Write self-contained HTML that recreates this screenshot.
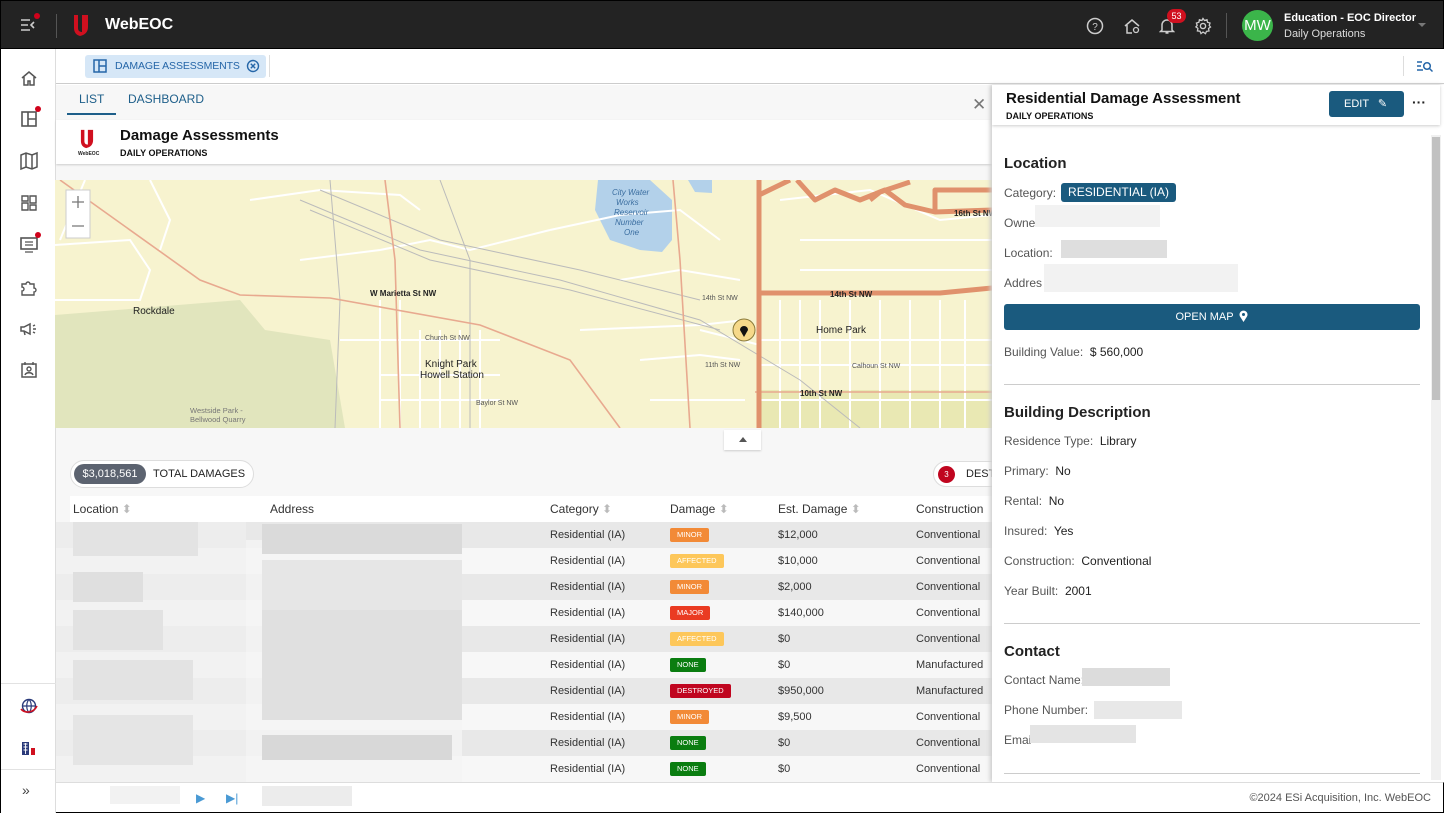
<!DOCTYPE html>
<html><head><meta charset="utf-8">
<style>
*{box-sizing:border-box;margin:0;padding:0}
body{width:1444px;height:813px;overflow:hidden;font-family:"Liberation Sans",sans-serif;background:#fff;position:relative;color:#222}
.abs{position:absolute;white-space:nowrap}
.top{left:0;top:0;width:1444px;height:49px;background:#232323;border:1px solid #000}
.side{left:0;top:49px;width:56px;height:764px;background:#fff;border-right:1px solid #ddd;border-left:1px solid #000}
.ico{position:absolute;left:18px;width:20px;height:20px}
.dot{position:absolute;width:6px;height:6px;border-radius:50%;background:#d0021b}
.row{position:absolute;left:56px;width:936px;height:26px;font-size:11px;color:#333}
.row span{position:absolute;top:7px}
.badge{position:absolute;top:6px;height:14px;font-size:7.5px;color:#fff;line-height:14px;padding:0 7px;border-radius:2px;left:614px}
.lbl{position:absolute;left:1004px;font-size:12px;color:#555;white-space:nowrap}
.lbl b{color:#222;font-weight:normal}
.h{position:absolute;left:1004px;font-size:15px;font-weight:bold;color:#222}
.blur{position:absolute;background:#ddd}
</style></head><body>

<div class="abs top">
  <svg class="abs" style="left:18px;top:16px" width="18" height="16" viewBox="0 0 18 16"><path d="M2 3h9M2 8h7M2 13h9M15 5l-3 3 3 3" stroke="#ccc" stroke-width="1.6" fill="none"/></svg>
  <div class="dot" style="left:33px;top:12px"></div>
  <div class="abs" style="left:55px;top:13px;width:1px;height:24px;background:#555"></div>
  <svg class="abs" style="left:72px;top:13px" width="16" height="23" viewBox="0 0 16 23"><path d="M1 1h4v13c0 3 2 4 4 4V1h6v12c0 5-3 8-8 9C3 21 1 18 1 14z" fill="#d0101f"/></svg>
  <div class="abs" style="left:104px;top:15px;color:#fff;font-size:16px;font-weight:bold">WebEOC</div>
  <svg class="abs" style="left:1085px;top:16px" width="18" height="18" viewBox="0 0 18 18"><circle cx="9" cy="9" r="7.5" stroke="#ccc" stroke-width="1.5" fill="none"/><text x="9" y="13" font-size="10" fill="#ccc" text-anchor="middle" font-family="Liberation Sans">?</text></svg>
  <svg class="abs" style="left:1122px;top:16px" width="18" height="18" viewBox="0 0 18 18"><path d="M2 9L9 3l7 6M4 8v8h5" stroke="#ccc" stroke-width="1.5" fill="none"/><circle cx="13" cy="13" r="2.5" stroke="#ccc" stroke-width="1.3" fill="none"/></svg>
  <svg class="abs" style="left:1158px;top:16px" width="16" height="18" viewBox="0 0 16 18"><path d="M3 13V8a5 5 0 0 1 10 0v5l1.5 1.5h-13zM6.5 16h3" stroke="#ccc" stroke-width="1.5" fill="none"/></svg>
  <div class="abs" style="left:1166px;top:8px;width:19px;height:14px;border-radius:7px;background:#d0101f;color:#fff;font-size:9px;text-align:center;line-height:14px">53</div>
  <svg class="abs" style="left:1193px;top:16px" width="18" height="18" viewBox="0 0 18 18"><circle cx="9" cy="9" r="2.6" stroke="#ccc" stroke-width="1.4" fill="none"/><path d="M9 1.5l1.5 2 2.5-.8.5 2.5 2.5.8-.8 2.5 1.3 1.5-2 1.5.5 2.5-2.5.3-1 2.4L9 15l-2 1.6-1-2.4-2.6-.3.5-2.5-2-1.5L3.2 8.5 2.4 6l2.5-.8.5-2.5 2.5.8z" stroke="#ccc" stroke-width="1.3" fill="none"/></svg>
  <div class="abs" style="left:1225px;top:12px;width:1px;height:25px;background:#555"></div>
  <div class="abs" style="left:1241px;top:9px;width:31px;height:31px;border-radius:50%;background:#3bb54a;color:#fff;font-size:15px;text-align:center;line-height:31px">MW</div>
  <div class="abs" style="left:1283px;top:11px;color:#fff;font-size:11px;font-weight:bold">Education - EOC Director</div>
  <div class="abs" style="left:1283px;top:27px;color:#ddd;font-size:11px">Daily Operations</div>
  <div class="abs" style="left:1417px;top:22px;border:4px solid transparent;border-top:4px solid #777"></div>
</div>

<div class="abs side">
  <svg class="ico" style="top:19px" viewBox="0 0 20 20"><path d="M3 10l7-6 7 6M5 9v8h4v-4h2v4h4V9" stroke="#555" stroke-width="1.5" fill="none"/></svg>
  <svg class="ico" style="top:60px" viewBox="0 0 20 20"><rect x="3" y="3" width="14" height="14" stroke="#555" stroke-width="1.6" fill="none"/><path d="M9 3v14M9 10h8" stroke="#555" stroke-width="1.6"/></svg>
  <div class="dot" style="left:34px;top:57px"></div>
  <svg class="ico" style="top:102px" viewBox="0 0 20 20"><path d="M2 4l5-2 6 2 5-2v14l-5 2-6-2-5 2zM7 2v14M13 4v14" stroke="#555" stroke-width="1.5" fill="none"/></svg>
  <svg class="ico" style="top:144px" viewBox="0 0 20 20"><path d="M3 3h6v5H3zM11 3h6v7h-6zM3 10h6v7H3zM11 12h6v5h-6z" stroke="#555" stroke-width="1.4" fill="none"/></svg>
  <svg class="ico" style="top:186px" viewBox="0 0 20 20"><rect x="2" y="3" width="16" height="11" stroke="#555" stroke-width="1.6" fill="none"/><path d="M6 17h8M6 7h8M6 10h8" stroke="#555" stroke-width="1.3"/></svg>
  <div class="dot" style="left:34px;top:183px"></div>
  <svg class="ico" style="top:228px" viewBox="0 0 20 20"><path d="M3 7h4a2 2 0 1 1 4 0h4v4a2 2 0 1 1 0 4v3H3v-4a2 2 0 1 0 0-4z" stroke="#555" stroke-width="1.4" fill="none"/></svg>
  <svg class="ico" style="top:270px" viewBox="0 0 20 20"><path d="M2 8h3l6-3v10l-6-3H2zM5 12l1 4M14 7l2-1M14 10h3M14 13l2 1" stroke="#555" stroke-width="1.5" fill="none"/></svg>
  <svg class="ico" style="top:311px" viewBox="0 0 20 20"><rect x="3" y="4" width="14" height="13" stroke="#555" stroke-width="1.5" fill="none"/><circle cx="10" cy="9" r="2" stroke="#555" stroke-width="1.4" fill="none"/><path d="M6 15c1-3 7-3 8 0M6 2v3M14 2v3" stroke="#555" stroke-width="1.4" fill="none"/></svg>
  <div class="abs" style="left:0;top:634px;width:55px;height:1px;background:#e2e2e2"></div>
  <svg class="ico" style="top:647px" viewBox="0 0 20 20"><circle cx="10" cy="10" r="6.5" stroke="#2a3a7a" stroke-width="1.4" fill="none"/><path d="M3.5 10h13M10 3.5c-3 3-3 10 0 13M10 3.5c3 3 3 10 0 13" stroke="#2a3a7a" stroke-width="1.2" fill="none"/><path d="M2 13c3 4 12 5 16-3" stroke="#d0101f" stroke-width="1.6" fill="none"/></svg>
  <svg class="ico" style="top:689px" viewBox="0 0 20 20"><path d="M3 4h7v13H3z" fill="#2a3a7a"/><path d="M4.5 6h4M4.5 9h4M4.5 12h4M6.5 5v11" stroke="#fff" stroke-width=".9"/><path d="M12 10h4v7h-4z" fill="#d0101f"/></svg>
  <div class="abs" style="left:0;top:720px;width:55px;height:1px;background:#e2e2e2"></div>
  <div class="abs" style="left:21px;top:733px;font-size:14px;color:#444">»</div>
</div>

<!-- tab bar -->
<div class="abs" style="left:56px;top:49px;width:1388px;height:35px;background:#fff;border-bottom:1px solid #ccc"></div>
<div class="abs" style="left:85px;top:55px;width:181px;height:23px;background:#d6e7f7;border-radius:3px"></div>
<svg class="abs" style="left:93px;top:59px" width="14" height="14" viewBox="0 0 14 14"><rect x="1" y="1" width="12" height="12" stroke="#2566a8" stroke-width="1.5" fill="none"/><path d="M6 1v12M6 7h7" stroke="#2566a8" stroke-width="1.5"/></svg>
<div class="abs" style="left:115px;top:60px;font-size:10.5px;color:#2566a8;letter-spacing:-0.1px">DAMAGE ASSESSMENTS</div>
<svg class="abs" style="left:246px;top:59px" width="14" height="14" viewBox="0 0 14 14"><circle cx="7" cy="7" r="5.5" stroke="#2566a8" stroke-width="1.4" fill="none"/><path d="M4.8 4.8l4.4 4.4M9.2 4.8l-4.4 4.4" stroke="#2566a8" stroke-width="1.4"/></svg>
<div class="abs" style="left:269px;top:55px;width:1px;height:22px;background:#ddd"></div>
<svg class="abs" style="left:1416px;top:60px" width="17" height="13" viewBox="0 0 17 13"><path d="M1 2h5M1 6h4M1 10h6" stroke="#2566a8" stroke-width="1.5"/><circle cx="11" cy="6" r="3.3" stroke="#2566a8" stroke-width="1.5" fill="none"/><path d="M13.5 8.5l3 3" stroke="#2566a8" stroke-width="1.5"/></svg>
<div class="abs" style="left:1403px;top:56px;width:1px;height:20px;background:#ddd"></div>

<!-- content -->
<div class="abs" style="left:56px;top:85px;width:936px;height:697px;background:#f7f7f7"></div>
<div class="abs" style="left:79px;top:92px;font-size:12px;color:#1e5f8a">LIST</div>
<div class="abs" style="left:128px;top:92px;font-size:12px;color:#1e5f8a">DASHBOARD</div>
<div class="abs" style="left:67px;top:113px;width:49px;height:2px;background:#1e5f8a"></div>
<div class="abs" style="left:972px;top:95px;font-size:17px;color:#777">✕</div>
<div class="abs" style="left:56px;top:120px;width:936px;height:44px;background:#fff;box-shadow:0 1px 2px #ccc"></div>
<svg class="abs" style="left:80px;top:129px" width="14" height="20" viewBox="0 0 16 23"><path d="M1 1h4v13c0 3 2 4 4 4V1h6v12c0 5-3 8-8 9C3 21 1 18 1 14z" fill="#d0101f"/></svg>
<div class="abs" style="left:78px;top:151px;font-size:5px;font-weight:bold">WebEOC</div>
<div class="abs" style="left:120px;top:127px;font-size:15px;font-weight:bold;color:#111">Damage Assessments</div>
<div class="abs" style="left:120px;top:148px;font-size:9px;font-weight:bold;color:#111">DAILY OPERATIONS</div>

<!-- map -->
<svg class="abs" style="left:55px;top:180px" width="937" height="248" viewBox="55 180 937 248">
<rect x="55" y="180" width="937" height="248" fill="#f7f3cf"/>
<path d="M55 315 L240 300 L265 330 L330 340 L345 428 L55 428z" fill="#e1e5bd"/>
<path d="M760 390 L992 390 L992 428 L760 428z" fill="#e9e8b3"/>
<path d="M598 180 L650 180 L672 200 L672 240 L662 252 L640 250 L610 240 L595 210z" fill="#b3d1ea"/>
<path d="M688 180 L712 180 L712 193 L695 192z" fill="#b3d1ea"/>
<g stroke="#fff" stroke-width="2" fill="none">
<path d="M55 245 L130 240 L150 270 L140 300 L55 300"/><path d="M250 200 L320 190 L400 195 L420 210"/><path d="M300 260 L380 250 L430 240 L470 250 L550 230"/><path d="M550 230 L620 215 L680 210 L720 240"/><path d="M580 330 L700 325 L745 320"/><path d="M700 330 L740 340 L760 345"/>
<path d="M780 300 V428 M800 300 V428 M820 300 V428 M850 300 V428 M880 300 V428 M910 300 V428 M940 300 V428 M965 300 V428"/>
<path d="M760 340 H992 M760 365 H992 M760 400 H992"/>
<path d="M380 300 V428 M400 300 V428 M420 330 V428 M440 330 V428 M460 330 V428 M480 330 V428"/>
<path d="M340 340 H500 M380 375 H500 M380 400 H500"/>
<path d="M780 200 L870 190 L940 220 L992 215 M800 240 H992 M800 270 H992"/>
<path d="M620 280 L680 270 L740 280 M640 360 L700 355 L740 360 M650 400 L745 400"/>
<path d="M85 180 L60 240 M150 180 L170 220 L160 250"/>
</g>
<g stroke="#bbb" stroke-width="1" fill="none">
<path d="M300 200 L420 250 L560 280 L700 320 L800 380 L860 428"/><path d="M310 210 L430 260 L570 290 L720 330"/><path d="M320 190 L440 240 L580 270 L700 300"/><path d="M330 180 L340 300 L335 428"/><path d="M440 180 L470 260 L470 428"/>
</g>
<g stroke="#e8a98f" stroke-width="1.6" fill="none">
<path d="M60 180 L200 280 L240 295 L330 298 L480 325 L570 360 L620 428"/><path d="M385 180 L395 260 L400 428"/><path d="M673 180 L680 260 L690 428"/><path d="M755 392 H992"/>
</g>
<g stroke="#e0916c" stroke-width="5" fill="none" stroke-linejoin="round">
<path d="M759 180 V428"/><path d="M759 293 H940 L992 288"/><path d="M759 195 L790 180 M797 180 L815 200 L835 190 L860 200 L885 190 L905 205 L935 212 L992 210"/><path d="M870 200 L880 192 L910 182"/><path d="M935 212 L935 190 L992 190"/>
</g>
<g font-family="Liberation Sans" fill="#222">
<text x="133" y="314" font-size="10">Rockdale</text>
<text x="425" y="367" font-size="10">Knight Park</text><text x="420" y="378" font-size="10">Howell Station</text>
<text x="816" y="333" font-size="10">Home Park</text>
<text x="830" y="297" font-size="8" font-weight="bold">14th St NW</text>
<text x="800" y="396" font-size="8" font-weight="bold">10th St NW</text>
<text x="954" y="216" font-size="8" font-weight="bold">16th St NW</text>
<text x="370" y="296" font-size="8" font-weight="bold">W Marietta St NW</text>
<text x="612" y="195" font-size="8" fill="#3b6ea0" font-style="italic">City Water</text>
<text x="616" y="205" font-size="8" fill="#3b6ea0" font-style="italic">Works</text>
<text x="614" y="215" font-size="8" fill="#3b6ea0" font-style="italic">Reservoir</text>
<text x="615" y="225" font-size="8" fill="#3b6ea0" font-style="italic">Number</text>
<text x="624" y="235" font-size="8" fill="#3b6ea0" font-style="italic">One</text>
<text x="190" y="413" font-size="7.5" fill="#777">Westside Park -</text>
<text x="190" y="422" font-size="7.5" fill="#777">Bellwood Quarry</text>
<text x="425" y="340" font-size="7" fill="#555">Church St NW</text>
<text x="476" y="405" font-size="7" fill="#555">Baylor St NW</text>
<text x="705" y="367" font-size="7" fill="#555">11th St NW</text>
<text x="852" y="368" font-size="7" fill="#555">Calhoun St NW</text>
<text x="702" y="300" font-size="7" fill="#555">14th St NW</text>
</g>
<rect x="66" y="190" width="24" height="48" fill="#fff" stroke="#ccc"/><path d="M72 202h12M78 196v12M72 226h12" stroke="#777" stroke-width="1.3"/>
<circle cx="744" cy="330" r="11" fill="#f6d98a" stroke="#8a7a3a"/><path d="M744 337 L740 330 a4 4 0 1 1 8 0z" fill="#111"/>
</svg>
<div class="abs" style="left:724px;top:430px;width:37px;height:20px;background:#fff;box-shadow:0 1px 2px #ccc"></div>
<div class="abs" style="left:739px;top:437px;border:4px solid transparent;border-bottom:5px solid #555;border-top:0"></div>

<div class="abs" style="left:70px;top:460px;width:184px;height:28px;border:1px solid #ddd;border-radius:14px;background:#fff"></div>
<div class="abs" style="left:74px;top:464px;width:72px;height:20px;border-radius:10px;background:#5c6370;color:#fff;font-size:11px;text-align:center;line-height:20px">$3,018,561</div>
<div class="abs" style="left:153px;top:468px;font-size:11px">TOTAL DAMAGES</div>
<div class="abs" style="left:933px;top:461px;width:70px;height:26px;border:1px solid #ddd;border-radius:13px;background:#fff"></div>
<div class="abs" style="left:938px;top:466px;width:17px;height:17px;border-radius:50%;background:#c0051f;color:#fff;font-size:8px;text-align:center;line-height:17px">3</div>
<div class="abs" style="left:966px;top:468px;font-size:11px">DEST</div>

<div class="abs" style="left:70px;top:496px;width:922px;height:26px;background:#fff"></div>
<div class="abs" style="left:73px;top:502px;font-size:12px;color:#333">Location <span style="color:#bbb">⬍</span></div>
<div class="abs" style="left:270px;top:502px;font-size:12px;color:#333">Address</div>
<div class="abs" style="left:550px;top:502px;font-size:12px;color:#333">Category <span style="color:#bbb">⬍</span></div>
<div class="abs" style="left:670px;top:502px;font-size:12px;color:#333">Damage <span style="color:#bbb">⬍</span></div>
<div class="abs" style="left:778px;top:502px;font-size:12px;color:#333">Est. Damage <span style="color:#bbb">⬍</span></div>
<div class="abs" style="left:916px;top:502px;font-size:12px;color:#333">Construction</div>

<div class="row" style="top:522px;background:#e8e8e8"><span style="left:494px">Residential (IA)</span><div class="badge" style="background:#f28a37">MINOR</div><span style="left:722px">$12,000</span><span style="left:860px">Conventional</span></div>
<div class="row" style="top:548px;background:#f7f7f7"><span style="left:494px">Residential (IA)</span><div class="badge" style="background:#fdc75a">AFFECTED</div><span style="left:722px">$10,000</span><span style="left:860px">Conventional</span></div>
<div class="row" style="top:574px;background:#e8e8e8"><span style="left:494px">Residential (IA)</span><div class="badge" style="background:#f28a37">MINOR</div><span style="left:722px">$2,000</span><span style="left:860px">Conventional</span></div>
<div class="row" style="top:600px;background:#f7f7f7"><span style="left:494px">Residential (IA)</span><div class="badge" style="background:#ea3b22">MAJOR</div><span style="left:722px">$140,000</span><span style="left:860px">Conventional</span></div>
<div class="row" style="top:626px;background:#e8e8e8"><span style="left:494px">Residential (IA)</span><div class="badge" style="background:#fdc75a">AFFECTED</div><span style="left:722px">$0</span><span style="left:860px">Conventional</span></div>
<div class="row" style="top:652px;background:#f7f7f7"><span style="left:494px">Residential (IA)</span><div class="badge" style="background:#0a7d10">NONE</div><span style="left:722px">$0</span><span style="left:860px">Manufactured</span></div>
<div class="row" style="top:678px;background:#e8e8e8"><span style="left:494px">Residential (IA)</span><div class="badge" style="background:#c0051f">DESTROYED</div><span style="left:722px">$950,000</span><span style="left:860px">Manufactured</span></div>
<div class="row" style="top:704px;background:#f7f7f7"><span style="left:494px">Residential (IA)</span><div class="badge" style="background:#f28a37">MINOR</div><span style="left:722px">$9,500</span><span style="left:860px">Conventional</span></div>
<div class="row" style="top:730px;background:#e8e8e8"><span style="left:494px">Residential (IA)</span><div class="badge" style="background:#0a7d10">NONE</div><span style="left:722px">$0</span><span style="left:860px">Conventional</span></div>
<div class="row" style="top:756px;background:#f7f7f7"><span style="left:494px">Residential (IA)</span><div class="badge" style="background:#0a7d10">NONE</div><span style="left:722px">$0</span><span style="left:860px">Conventional</span></div>

<!-- blurred cells -->
<div class="blur" style="left:56px;top:522px;width:190px;height:260px;background:rgba(240,240,240,.7)"></div>
<div class="blur" style="left:73px;top:522px;width:125px;height:34px;background:#e3e3e3"></div>
<div class="blur" style="left:73px;top:572px;width:70px;height:30px;background:#dfdfdf"></div>
<div class="blur" style="left:73px;top:610px;width:90px;height:40px;background:#e2e2e2"></div>
<div class="blur" style="left:73px;top:660px;width:120px;height:40px;background:#e3e3e3"></div>
<div class="blur" style="left:73px;top:715px;width:120px;height:50px;background:#e5e5e5"></div>
<div class="blur" style="left:246px;top:540px;width:216px;height:242px;background:rgba(244,244,244,.8)"></div>
<div class="blur" style="left:262px;top:524px;width:200px;height:30px;background:#dadada"></div>
<div class="blur" style="left:262px;top:560px;width:200px;height:50px;background:#e6e6e6"></div>
<div class="blur" style="left:262px;top:610px;width:200px;height:110px;background:#e0e0e0"></div>
<div class="blur" style="left:262px;top:735px;width:190px;height:25px;background:#d8d8d8"></div>

<!-- right panel -->
<div class="abs" style="left:992px;top:85px;width:452px;height:697px;background:#fff;box-shadow:-2px 0 4px #ccc"></div>
<div class="abs" style="left:992px;top:85px;width:448px;height:40px;background:#fff;box-shadow:0 1px 3px #ccc"></div>
<div class="abs" style="left:1006px;top:90px;font-size:15px;font-weight:bold;color:#111">Residential Damage Assessment</div>
<div class="abs" style="left:1006px;top:111px;font-size:9px;font-weight:bold;color:#111">DAILY OPERATIONS</div>
<div class="abs" style="left:1329px;top:91px;width:75px;height:26px;background:#1a5a7e;border-radius:3px;color:#fff;font-size:11px;line-height:26px;padding-left:15px">EDIT <span style="margin-left:6px">✎</span></div>
<div class="abs" style="left:1412px;top:94px;font-size:14px;font-weight:bold">···</div>
<div class="abs" style="left:1431px;top:135px;width:10px;height:645px;background:#f0f0f0"></div>
<div class="abs" style="left:1432px;top:137px;width:8px;height:263px;background:#c1c1c1"></div>

<div class="h" style="top:155px">Location</div>
<div class="lbl" style="top:186px">Category:</div>
<div class="abs" style="left:1061px;top:183px;width:115px;height:19px;background:#1a5a7e;border-radius:3px;color:#fff;font-size:12px;text-align:center;line-height:19px">RESIDENTIAL (IA)</div>
<div class="lbl" style="top:216px">Owne</div>
<div class="blur" style="left:1035px;top:205px;width:125px;height:22px;background:#f2f2f2"></div>
<div class="lbl" style="top:246px">Location:</div>
<div class="blur" style="left:1061px;top:240px;width:106px;height:18px;background:#dedede"></div>
<div class="lbl" style="top:276px">Addres</div>
<div class="blur" style="left:1044px;top:264px;width:194px;height:28px;background:#f2f2f2"></div>
<div class="abs" style="left:1004px;top:304px;width:416px;height:26px;background:#1a5a7e;border-radius:3px;color:#fff;font-size:11px;text-align:center;line-height:26px">OPEN MAP &nbsp;<svg width="9" height="12" viewBox="0 0 9 12" style="vertical-align:-2px"><path d="M4.5 12L1 6.5a4 4 0 1 1 7 0z" fill="#fff"/><circle cx="4.5" cy="4.5" r="1.5" fill="#1a5a7e"/></svg></div>
<div class="lbl" style="top:345px">Building Value:&nbsp; <b>$ 560,000</b></div>
<div class="abs" style="left:1004px;top:384px;width:416px;height:1px;background:#ccc"></div>
<div class="h" style="top:404px">Building Description</div>
<div class="lbl" style="top:434px">Residence Type:&nbsp; <b>Library</b></div>
<div class="lbl" style="top:464px">Primary:&nbsp; <b>No</b></div>
<div class="lbl" style="top:494px">Rental:&nbsp; <b>No</b></div>
<div class="lbl" style="top:524px">Insured:&nbsp; <b>Yes</b></div>
<div class="lbl" style="top:554px">Construction:&nbsp; <b>Conventional</b></div>
<div class="lbl" style="top:584px">Year Built:&nbsp; <b>2001</b></div>
<div class="abs" style="left:1004px;top:623px;width:416px;height:1px;background:#ccc"></div>
<div class="h" style="top:643px">Contact</div>
<div class="lbl" style="top:673px">Contact Name:</div>
<div class="blur" style="left:1082px;top:668px;width:88px;height:18px;background:#dcdcdc"></div>
<div class="lbl" style="top:703px">Phone Number:</div>
<div class="blur" style="left:1094px;top:701px;width:88px;height:18px;background:#e8e8e8"></div>
<div class="lbl" style="top:733px">Emai</div>
<div class="blur" style="left:1030px;top:725px;width:106px;height:18px;background:#e4e4e4"></div>
<div class="abs" style="left:1004px;top:773px;width:416px;height:1px;background:#ccc"></div>

<!-- footer -->
<div class="abs" style="left:56px;top:782px;width:1388px;height:31px;background:#fff;border-top:1px solid #ddd;border-bottom:1px solid #000;border-right:1px solid #000"></div>
<div class="blur" style="left:262px;top:786px;width:90px;height:20px;background:#ececec"></div>
<div class="blur" style="left:110px;top:786px;width:70px;height:18px;background:#f2f2f2"></div>
<div class="abs" style="left:196px;top:791px;color:#4a9ad4;font-size:12px">▶</div>
<div class="abs" style="left:226px;top:791px;color:#4a9ad4;font-size:12px">▶|</div>
<div class="abs" style="right:13px;top:792px;font-size:11px;color:#555">©2024 ESi Acquisition, Inc. WebEOC</div>
</body></html>
